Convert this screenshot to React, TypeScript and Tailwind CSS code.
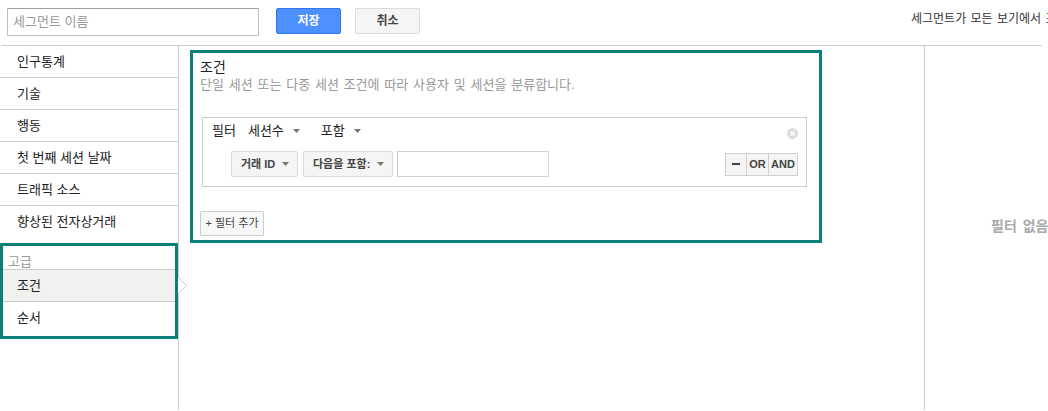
import React from "react";

const navItems = ["인구통계", "기술", "행동", "첫 번째 세션 날짜", "트래픽 소스", "향상된 전자상거래"];

function Caret() {
  return (
    <svg width="7" height="4" viewBox="0 0 7 4" className="shrink-0">
      <path d="M0 0 L7 0 L3.5 4 Z" fill="#777" />
    </svg>
  );
}

function Dropdown({ label, width }: { label: string; width: string }) {
  return (
    <div
      className={`${width} h-[26px] flex items-center justify-between pl-[9px] pr-[8px] bg-[#f5f5f5] border border-[#dcdcdc] rounded-[2px] text-[11px] font-bold text-[#444]`}
    >
      <span>{label}</span>
      <Caret />
    </div>
  );
}

export default function App() {
  return (
    <div className="relative w-[1048px] h-[411px] overflow-hidden bg-white text-[#222] font-['Liberation_Sans','Noto_Sans_CJK_KR',sans-serif]">
      {/* top bar */}
      <div className="h-[45px] flex items-start pt-[8px] pl-[7px] whitespace-nowrap">
        <div className="shrink-0 w-[252px] h-[28px] border border-[#c0c0c0] border-t-[#a0a0a0] flex items-center pl-[5px] text-[13px] text-[#999]">
          세그먼트 이름
        </div>
        <button className="shrink-0 ml-[17px] w-[65px] h-[26px] bg-[#4d90fe] border border-[#3079ed] rounded-[2px] text-white text-[12px] font-bold">
          저장
        </button>
        <button className="shrink-0 ml-[14px] w-[65px] h-[26px] bg-[#f5f5f5] border border-[#dcdcdc] rounded-[2px] text-[#444] text-[12px] font-bold">
          취소
        </button>
        <span className="shrink-0 ml-[491px] mt-[4px] leading-[14px] text-[12px] text-[#333] [word-spacing:1px]">
          세그먼트가 모든 보기에서 표시됩니다.
        </span>
      </div>

      {/* body */}
      <div className="ml-[1px] w-[1041px] border-t border-[#ccc] flex h-[365px]">
        {/* sidebar */}
        <div className="w-[179px] shrink-0 border-r border-[#ccc] -ml-[1px]">
          {navItems.map((item, i) => (
            <div
              key={item}
              className={`h-[32px] flex items-center pl-[17px] text-[13px] text-[#222] ${i < navItems.length - 1 ? "border-b border-[#ccc]" : ""}`}
            >
              {item}
            </div>
          ))}
          <div className="mt-[5px] w-[178px] border-[3px] border-[#0c7f78]">
            <div className="h-[23px] pt-[9px] pl-[5px] leading-[14px] text-[13px] text-[#999]">고급</div>
            <div className="h-[32px] border-t border-[#ccc] bg-[#f1f1f1] flex items-center pl-[14px] text-[13px]">조건</div>
            <div className="h-[35px] border-t border-[#ccc] flex items-center pb-[3px] pl-[14px] text-[13px]">순서</div>
          </div>
        </div>

        {/* main */}
        <div className="w-[746px] shrink-0 border-r border-[#ccc]">
          <div className="ml-[11px] mt-[4px] w-[632px] h-[193px] border-[3px] border-[#0c7f78] pt-[6px] pl-[7px]">
            <div className="text-[14px] leading-[16px] text-[#222]">조건</div>
            <div className="mt-[2px] text-[13px] leading-[16px] text-[#999] [word-spacing:1.2px]">
              단일 세션 또는 다중 세션 조건에 따라 사용자 및 세션을 분류합니다.
            </div>

            <div className="relative mt-[24px] ml-[2px] w-[605px] h-[70px] border border-[#ccc]">
              <div className="h-[26px] flex items-center pl-[9px] text-[13px]">
                <span>필터</span>
                <span className="ml-[12px]">세션수</span>
                <span className="ml-[9px]"><Caret /></span>
                <span className="ml-[21px]">포함</span>
                <span className="ml-[9px]"><Caret /></span>
              </div>
              <div className="absolute right-[8px] top-[10px] w-[11px] h-[11px] rounded-full bg-[#ddd] flex items-center justify-center">
                <svg width="5" height="5" viewBox="0 0 5 5">
                  <path d="M0.5 0.5 L4.5 4.5 M4.5 0.5 L0.5 4.5" stroke="#fff" strokeWidth="1.3" />
                </svg>
              </div>
              <div className="mt-[7px] flex items-center pl-[28px] pr-[8px]">
                <Dropdown label="거래 ID" width="w-[67px]" />
                <div className="ml-[5px]">
                  <Dropdown label="다음을 포함:" width="w-[90px]" />
                </div>
                <div className="ml-[4px] w-[152px] h-[26px] border border-[#d0d0d0] bg-white" />
                <div className="ml-auto flex h-[23px] border border-[#d0d0d0] bg-[#f5f5f5] text-[11px] font-bold text-[#444]">
                  <div className="w-[21px] flex items-center justify-center border-r border-[#d0d0d0]">
                    <div className="w-[8px] h-[2px] bg-[#444]" />
                  </div>
                  <div className="w-[22px] flex items-center justify-center border-r border-[#d0d0d0]">OR</div>
                  <div className="w-[28px] flex items-center justify-center">AND</div>
                </div>
              </div>
            </div>

            <button className="mt-[24px] w-[64px] h-[25px] bg-[#f8f8f8] border border-[#ccc] rounded-[2px] text-[11px] text-[#444]">
              + 필터 추가
            </button>
          </div>
        </div>

        {/* right pane */}
        <div className="flex-1 pl-[66px] pt-[168px] whitespace-nowrap">
          <span className="text-[14px] leading-[18px] font-bold text-[#aaa] [word-spacing:2px]">필터 없음</span>
        </div>
      </div>

      {/* pointer for selected nav item */}
      <svg className="absolute left-[178px] top-[277px]" width="10" height="17" viewBox="0 0 10 17">
        <path d="M0 0 L8.5 8.5 L0 17 Z" fill="#fff" />
        <path d="M0.5 0.5 L8.5 8.5 L0.5 16.5" fill="none" stroke="#ccc" strokeWidth="1" />
      </svg>
    </div>
  );
}
